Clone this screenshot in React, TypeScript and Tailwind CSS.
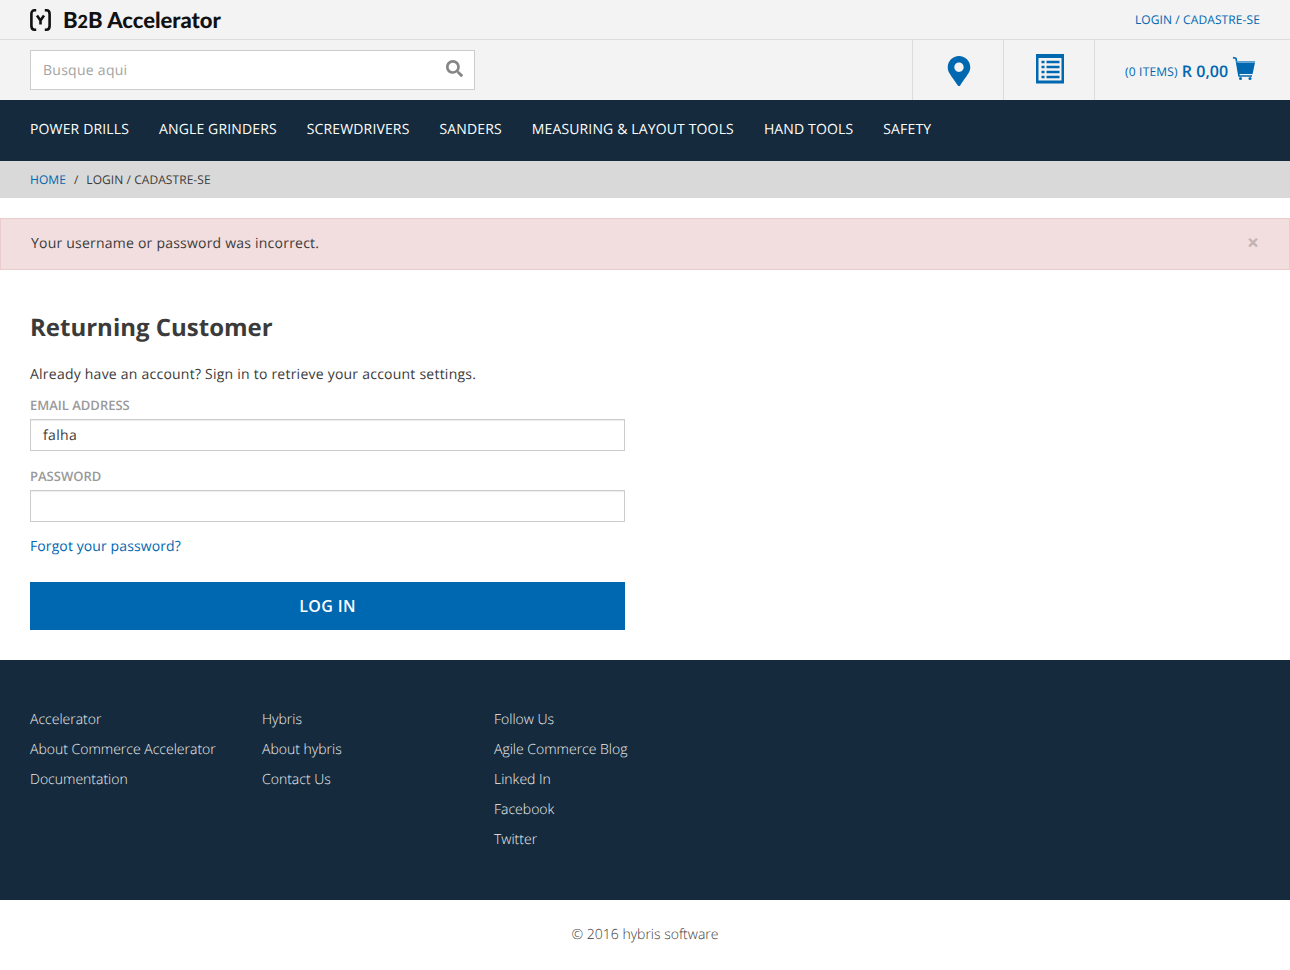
import { FaMapMarkerAlt, FaSearch } from "react-icons/fa";

const navItems = [
  "POWER DRILLS",
  "ANGLE GRINDERS",
  "SCREWDRIVERS",
  "SANDERS",
  "MEASURING & LAYOUT TOOLS",
  "HAND TOOLS",
  "SAFETY",
];

const footerColumns = [
  { width: "w-[232px]", links: ["Accelerator", "About Commerce Accelerator", "Documentation"] },
  { width: "w-[232px]", links: ["Hybris", "About hybris", "Contact Us"] },
  { width: "w-[232px]", links: ["Follow Us", "Agile Commerce Blog", "Linked In", "Facebook", "Twitter"] },
];

const LogoMark = () => (
  <svg width="21" height="22" viewBox="0 0 21 22" fill="none" stroke="#111" strokeWidth="2.6">
    <path d="M6.2 1.3H4.6C2.6 1.3 1.4 2.6 1.4 5V17C1.4 19.4 2.6 20.7 4.6 20.7H6.2" />
    <path d="M14.8 1.3H16.4C18.4 1.3 19.6 2.6 19.6 5V17C19.6 19.4 18.4 20.7 16.4 20.7H14.8" />
    <path d="M7 6.5L10.5 11.5L14 6.5M10.5 11V15.5" strokeWidth="2.6" />
  </svg>
);

const ListIcon = () => (
  <svg width="28" height="30" viewBox="0 0 28 30" fill="#0067b1">
    <path
      fillRule="evenodd"
      d="M0 0H28V29.5H0ZM2.5 4V26.5H25.5V4ZM5.5 6.7H8.5V9.2H5.5ZM10.5 6.7H23.5V9.2H10.5ZM5.5 11.7H8.5V14.2H5.5ZM10.5 11.7H23.5V14.2H10.5ZM5.5 16.7H8.5V19.2H5.5ZM10.5 16.7H23.5V19.2H10.5ZM5.5 21.7H8.5V24.2H5.5ZM10.5 21.7H23.5V24.2H10.5Z"
    />
  </svg>
);

const CartIcon = () => (
  <svg width="24" height="24" viewBox="0 0 24 24" fill="#0067b1">
    <path d="M1 1.6L4 2.3L7 20H20" fill="none" stroke="#0067b1" strokeWidth="1.6" />
    <path d="M4.4 6.5H23L20.6 18H6.4Z" />
    <path d="M4.2 5H23.2L23 6.5H4.4Z" fill="#5a9fd0" />
    <circle cx="8.5" cy="22.4" r="1.5" />
    <circle cx="18" cy="22.4" r="1.5" />
  </svg>
);

export default function App() {
  return (
    <div className="min-h-[970px] bg-white font-['Open_Sans',sans-serif] text-[14px] text-[#3b3b3b] [text-rendering:geometricPrecision]">
      <header className="bg-[#f3f3f3]">
        <div className="flex h-10 items-center justify-between border-b border-[#dcdcdc] px-[30px]">
          <div className="flex items-center gap-3">
            <LogoMark />
            <span className="font-['Lato',sans-serif] text-[22px] leading-none font-black text-[#111]">
              B<span className="text-[18px]">2</span>B Accelerator
            </span>
          </div>
          <a className="text-[12px] tracking-[0.1px] text-[#0067b1]">LOGIN / CADASTRE-SE</a>
        </div>
        <div className="flex h-[60px] items-center justify-between pl-[30px]">
          <div className="flex h-10 w-[445px] items-center justify-between border border-[#cccccc] bg-white pr-[11px] pl-3">
            <span className="text-[14px] tracking-[0.27px] text-[#a3a3a3]">Busque aqui</span>
            <FaSearch className="mb-1 size-[17px] text-[#858585]" />
          </div>
          <div className="flex h-full">
            <div className="flex w-[91px] items-center justify-center border-l border-[#dcdcdc] pt-0.5 pl-0.5">
              <FaMapMarkerAlt className="size-[30px] text-[#0067b1]" />
            </div>
            <div className="flex w-[91px] items-center justify-center border-l border-[#dcdcdc] pb-0.5 pl-0.5">
              <ListIcon />
            </div>
            <div className="flex w-[196px] items-center gap-1 border-l border-[#dcdcdc] pl-[30px] text-[#0067b1]">
              <span className="pt-1 text-[12px] tracking-[0.2px]">(0 ITEMS)</span>
              <span className="pt-0.5 text-[16px] font-semibold">R 0,00</span>
              <span className="mb-[5px]">
                <CartIcon />
              </span>
            </div>
          </div>
        </div>
      </header>

      <nav className="flex h-[61px] items-center gap-[30px] bg-[#152a3c] px-[30px] pb-0.5 text-white">
        {navItems.map((item) => (
          <a key={item} className="text-[14px] tracking-[0.14px]">
            {item}
          </a>
        ))}
      </nav>

      <div className="flex h-[37px] items-center bg-[#d9d9d9] px-[30px] text-[12px] tracking-[0.06px]">
        <a className="text-[#0067b1]">HOME</a>
        <span className="mx-2">/</span>
        <span>LOGIN / CADASTRE-SE</span>
      </div>

      <div className="mt-5 flex h-[52px] items-center justify-between border border-[#ebcccc] bg-[#f2dede] px-[30px] pb-0.5">
        <span className="tracking-[0.22px]">Your username or password was incorrect.</span>
        <span className="text-[21px] leading-none font-bold text-[#c4b2b2]">×</span>
      </div>

      <main className="w-[655px] px-[30px] pt-[40px] pb-[30px]">
        <h1 className="text-[24px] leading-[36px] font-bold text-[#3b3b3b]">Returning Customer</h1>
        <p className="mt-[19px] leading-[20px] tracking-[0.23px]">
          Already have an account? Sign in to retrieve your account settings.
        </p>

        <label className="mt-[10px] block text-[13px] leading-[20px] font-semibold text-[#999999]">EMAIL ADDRESS</label>
        <div className="mt-1 flex h-8 items-center border border-[#cccccc] bg-white px-3 tracking-[0.35px] shadow-[inset_0_1px_1px_rgba(0,0,0,0.075)]">
          falha
        </div>

        <label className="mt-[15px] block text-[13px] leading-[20px] font-semibold text-[#999999]">PASSWORD</label>
        <div className="mt-1 h-8 border border-[#cccccc] bg-white shadow-[inset_0_1px_1px_rgba(0,0,0,0.075)]" />

        <a className="mt-[15px] block leading-[20px] tracking-[0.1px] text-[#0067b1]">Forgot your password?</a>

        <button className="mt-[25px] flex h-12 w-full items-center justify-center bg-[#0067b1] text-[16px] font-semibold tracking-[0.35px] text-white">
          LOG IN
        </button>
      </main>

      <footer className="flex h-[240px] bg-[#152a3c] px-[30px] pt-[45px] font-light text-[#f0f0f0]">
        {footerColumns.map((column) => (
          <ul key={column.links[0]} className={column.width}>
            {column.links.map((link) => (
              <li key={link} className="h-[30px] leading-[30px]">
                {link}
              </li>
            ))}
          </ul>
        ))}
      </footer>

      <div className="flex h-[70px] items-center justify-center pb-0.5 font-light">© 2016 hybris software</div>
    </div>
  );
}
